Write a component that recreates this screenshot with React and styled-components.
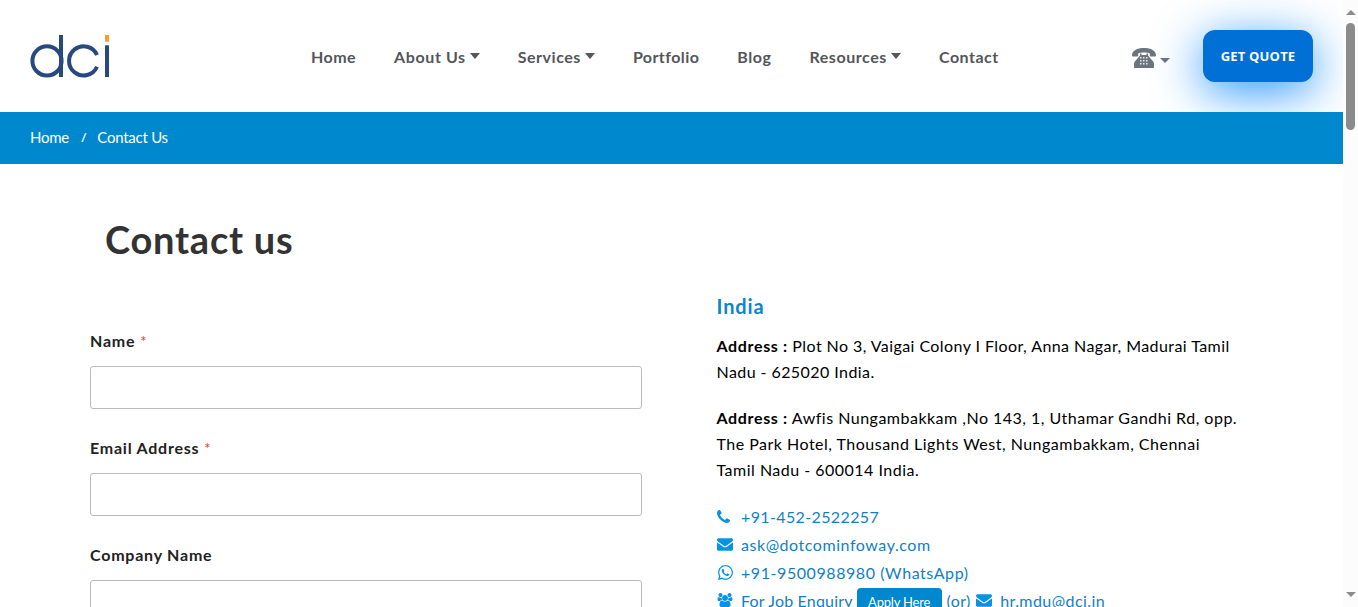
import React from "react";
import styled, { createGlobalStyle } from "styled-components";
import { FaWhatsapp } from "react-icons/fa";

const Global = createGlobalStyle`
  *, *::before, *::after { box-sizing: border-box; }
  body { margin: 0; background: #fff; overflow: hidden; font-family: Lato, "Liberation Sans", sans-serif; font-size: 16px; color: #000; }
  a { color: inherit; text-decoration: none; }
`;

const Shell = styled.div`
  display: flex;
  width: 100%;
  height: 100vh;
  overflow: hidden;
`;
const Page = styled.div`
  flex: 1;
  min-width: 0;
  height: 100%;
  overflow: hidden;
`;

const Header = styled.header`
  display: flex;
  align-items: center;
  height: 112px;
  padding: 0 30px;
`;
const Logo = styled.svg`
  display: block;
  width: 80px;
  height: 44px;
  margin-top: 2px;
  flex: none;
`;
const Nav = styled.nav`
  display: flex;
  gap: 38px;
  margin-left: 201px;
  padding-top: 1px;
`;
const NavLink = styled.a`
  display: flex;
  align-items: center;
  font-weight: 700;
  line-height: 24px;
  letter-spacing: ${(p) => p.$track}px;
  color: #54565a;
  white-space: nowrap;
`;
const Caret = styled.span`
  width: 0;
  height: 0;
  margin-left: 4px;
  margin-top: -1px;
  border: 5px solid transparent;
  border-top: 6px solid currentColor;
  border-bottom: 0;
`;
const HeaderActions = styled.div`
  display: flex;
  align-items: center;
  margin-left: auto;
`;
const PhoneToggle = styled.div`
  display: flex;
  align-items: center;
  margin-right: 33px;
  padding-top: 4px;
  color: #6c757d;
  svg { display: block; }
  ${Caret} { margin-top: 4px; border-top-width: 5px; }
`;
const QuoteButton = styled.a`
  display: flex;
  align-items: center;
  justify-content: center;
  width: 110px;
  height: 52px;
  border-radius: 12px;
  background: #006fd6;
  box-shadow: 0 10px 48px rgba(0, 132, 255, 0.85);
  color: #fff;
  font: 700 13px "Open Sans", sans-serif;
  letter-spacing: 0.2px;
`;

const Breadcrumb = styled.div`
  position: relative;
  display: flex;
  align-items: center;
  gap: 12px;
  height: 52px;
  padding: 0 30px 2px;
  background: #0088ce;
  color: #fff;
  font-size: 15px;
  letter-spacing: -0.25px;
`;
const Slash = styled.span`
  margin-right: -1px;
  font-size: 12px;
  font-weight: 700;
`;

const Content = styled.main`
  padding: 47px 90px 0;
`;
const Title = styled.h1`
  margin: 0 0 0 15px;
  font-size: 38px;
  line-height: 56px;
  font-weight: 700;
  letter-spacing: 0.75px;
  color: #333;
`;
const Columns = styled.div`
  display: grid;
  grid-template-columns: 552px 530px;
  column-gap: 74.5px;
`;
const Form = styled.form`
  padding-top: 62px;
`;
const Field = styled.div`
  margin-bottom: 27px;
`;
const Label = styled.label`
  display: block;
  height: 24px;
  margin-bottom: 13px;
  line-height: 24px;
  font-weight: 700;
  letter-spacing: 0.77px;
  color: #222;
`;
const Required = styled.span`
  font-weight: 400;
  color: #d9463e;
`;
const Input = styled.input`
  display: block;
  width: 100%;
  height: 43px;
  border: 1px solid #bbb;
  border-radius: 3px;
  background: #fff;
`;

const Office = styled.section`
  padding-top: 24px;
`;
const Country = styled.h2`
  margin: 0 0 12px;
  font-size: 20px;
  line-height: 30px;
  font-weight: 700;
  letter-spacing: 0.85px;
  color: #0d85ca;
`;
const Address = styled.p`
  margin: 0 0 20px;
  line-height: 26px;
  letter-spacing: ${(p) => p.$track}px;
  strong { letter-spacing: 0.65px; }
`;
const Contacts = styled.div`
  margin-top: -1px;
  color: #107fc6;
`;
const ContactLine = styled.div`
  display: flex;
  align-items: center;
  height: 28px;
  white-space: nowrap;
`;
const ContactText = styled.a`
  letter-spacing: ${(p) => p.$track}px;
`;
const IconSlot = styled.span`
  display: flex;
  width: 17px;
  margin-right: 7.5px;
  margin-left: ${(p) => p.$before || 0}px;
  color: #0693e6;
  svg { display: block; }
`;
const ApplyButton = styled.a`
  height: 28px;
  margin: 4px 5px 0 4px;
  width: 85px;
  border-radius: 4px;
  background: #0088ce;
  color: #fff;
  font-size: 13px;
  line-height: 28px;
  letter-spacing: -0.2px;
  text-align: center;
`;

const Scrollbar = styled.div`
  display: flex;
  flex-direction: column;
  align-items: center;
  justify-content: space-between;
  width: 15px;
  height: 100%;
  padding: 10px 0 10px;
  background: #fcfcfc;
`;
const ScrollTop = styled.div`
  display: flex;
  flex-direction: column;
  align-items: center;
  gap: 8px;
`;
const Arrow = styled.span`
  width: 0;
  height: 0;
  border: 5px solid transparent;
  ${(p) => (p.$up ? "border-bottom-color: #8b8b8b; border-top: 0;" : "border-top-color: #8b8b8b; border-bottom: 0;")}
`;
const Thumb = styled.div`
  width: 9px;
  height: 107px;
  border-radius: 5px;
  background: #8b8b8b;
`;

const DciLogo = () => (
  <Logo viewBox="30 35 80 44" role="img" aria-label="dci">
    <g fill="none" stroke="#28497f" strokeWidth="4">
      <circle cx="47" cy="60.9" r="14.6" />
      <path d="M61 35V77" />
      <path d="M97 55A14.6 14.6 0 1 0 97 66.8" />
      <path d="M107 45.3V77" />
    </g>
    <rect x="105" y="35" width="4" height="6.7" fill="#fa9c2b" />
  </Logo>
);

const Telephone = () => (
  <svg width="24" height="20" viewBox="0 0 24 20" fill="currentColor">
    <path d="M0 7.5C0 2.5 5 0 12 0s12 2.5 12 7.5c0 .6-.3.9-.9.9h-4.4c-.6 0-.9-.3-.9-.9V5.5C16 4.300 8 4.300 6.200 5.500v2c0 .6-.3.9-.9.900H.9C.3 8.400 0 8.100 0 7.500z" />
    <path d="M8 5.600h1.500v1.400h5V5.600H16v1.900l5.300 6.300c.5.700.7 1.400.7 2.200v3c0 .6-.4 1-1 1H3c-.6 0-1-.4-1-1v-3c0-.8.200-1.500.7-2.200L8 7.500z" />
    <g fill="#fff" fillOpacity="0.85">
      {[9, 12, 15].map((y) =>
        [8, 11, 14].map((x) => <rect key={`${x}-${y}`} x={x} y={y} width="1.500" height="1.500" />)
      )}
    </g>
  </svg>
);

const Phone = () => (
  <svg width="13" height="13" viewBox="0 128 1408 1408" fill="currentColor">
    <path d="M1408 1240q0 27-10 70.5t-21 68.5q-21 50-122 106-94 51-186 51-27 0-52.5-3.5t-57.5-12.5-47.5-14.5-55.5-20.5-49-18q-98-35-175-83-128-79-264.5-215.5t-215.5-264.5q-48-77-83-175-3-9-18-49t-20.5-55.5-14.5-47.5-12.5-57.5-3.5-52.5q0-92 51-186 56-101 106-122 25-11 68.5-21t70.5-10q14 0 21 3 18 6 53 76 11 19 30 54t35 63.5 31 53.5q3 4 17.5 25t21.5 35.5 7 28.5q0 20-28.5 50t-62 55-62 53-28.500 46q0 9 5 22.500t8.500 20.500 14 24 11.500 19q76 137 174 235t235 174q2 1 19 11.500t24 14 20.500 8.500 22.500 5q18 0 46-28.500t53-62 55-62 50-28.500q14 0 28.500 7t35.500 21.500 25 17.500q25 15 53.500 31t63.500 35 54 30q70 35 76 53 3 7 3 21z" />
  </svg>
);

const Envelope = () => (
  <svg width="16" height="13" viewBox="0 256 1792 1408" fill="currentColor">
    <path d="M1792 710v794q0 66-47 113t-113 47h-1472q-66 0-113-47t-47-113v-794q44 49 101 87 362 246 497 345 57 42 92.500 65.500t94.500 48 110 24.500h2q51 0 110-24.500t94.500-48 92.500-65.500q170-123 498-345 57-39 100-87zm0-294q0 79-49 151t-122 123q-376 261-468 325-10 7-42.500 31t-54 38.500-52 32.500-57.500 27-50 9h-2q-23 0-50-9t-57.500-27-52-32.500-54-38.500-42.500-31q-91-64-262-182.500t-205-142.500q-62-42-117-115.500t-55-136.500q0-78 41.500-130t118.500-52h1472q65 0 112.500 47t47.500 113z" />
  </svg>
);

const Users = () => (
  <svg width="16" height="14" viewBox="0 0 1920 1792" fill="currentColor">
    <path d="M593 896q-162 5-265 128h-134q-82 0-138-40.500t-56-118.500q0-353 124-353 6 0 43.500 21t97.500 42.500 119 21.500q67 0 133-23-5 37-5 66 0 139 81 256zm1071 637q0 120-73 189.500t-194 69.500h-874q-121 0-194-69.500t-73-189.500q0-53 3.500-103.500t14-109 26.500-108.500 43-97.500 62-81 85.500-53.500 111.500-20q10 0 43 21.500t73 48 107 48 135 21.500 135-21.500 107-48 73-48 43-21.500q61 0 111.500 20t85.500 53.500 62 81 43 97.500 26.500 108.500 14 109 3.500 103.500zm-1024-1277q0 106-75 181t-181 75-181-75-75-181 75-181 181-75 181 75 75 181zm704 384q0 159-112.500 271.500t-271.500 112.500-271.500-112.500-112.500-271.500 112.500-271.500 271.500-112.500 271.500 112.500 112.500 271.500zm576 225q0 78-56 118.500t-138 40.500h-134q-103-123-265-128 81-117 81-256 0-29-5-66 66 23 133 23 59 0 119-21.500t97.500-42.500 43.500-21q124 0 124 353zm-128-609q0 106-75 181t-181 75-181-75-75-181 75-181 181-75 181 75 75 181z" />
  </svg>
);

const links = [
  { label: "Home", track: 0.45 },
  { label: "About Us", track: 0.62, menu: true },
  { label: "Services", track: 0.52, menu: true },
  { label: "Portfolio", track: 0.42 },
  { label: "Blog", track: 0.55 },
  { label: "Resources", track: 0.57, menu: true },
  { label: "Contact", track: 0.5 },
];

const fields = [
  { label: "Name", required: true },
  { label: "Email Address", required: true },
  { label: "Company Name" },
];

export default function App() {
  return (
    <Shell>
      <Global />
      <Page>
        <Header>
          <DciLogo />
          <Nav>
            {links.map((l) => (
              <NavLink key={l.label} $track={l.track} href="#">
                {l.label}
                {l.menu && <Caret />}
              </NavLink>
            ))}
          </Nav>
          <HeaderActions>
            <PhoneToggle>
              <Telephone />
              <Caret />
            </PhoneToggle>
            <QuoteButton href="#">GET QUOTE</QuoteButton>
          </HeaderActions>
        </Header>
        <Breadcrumb>
          <a href="#">Home</a>
          <Slash>/</Slash>
          <span>Contact Us</span>
        </Breadcrumb>
        <Content>
          <Title>Contact us</Title>
          <Columns>
            <Form>
              {fields.map((f) => (
                <Field key={f.label}>
                  <Label>
                    {f.label} {f.required && <Required>*</Required>}
                  </Label>
                  <Input aria-label={f.label} />
                </Field>
              ))}
            </Form>
            <Office>
              <Country>India</Country>
              <Address $track={0.43}>
                <strong>Address :</strong> Plot No 3, Vaigai Colony I Floor, Anna Nagar, Madurai Tamil
                <br />
                Nadu - 625020 India.
              </Address>
              <Address $track={0.49}>
                <strong>Address :</strong> Awfis Nungambakkam ,No 143, 1, Uthamar Gandhi Rd, opp.
                <br />
                The Park Hotel, Thousand Lights West, Nungambakkam, Chennai
                <br />
                Tamil Nadu - 600014 India.
              </Address>
              <Contacts>
                <ContactLine>
                  <IconSlot><Phone /></IconSlot>
                  <ContactText $track={0.37}>+91-452-2522257</ContactText>
                </ContactLine>
                <ContactLine>
                  <IconSlot><Envelope /></IconSlot>
                  <ContactText $track={0.55}>ask@dotcominfoway.com</ContactText>
                </ContactLine>
                <ContactLine>
                  <IconSlot><FaWhatsapp size={17} /></IconSlot>
                  <ContactText $track={0.57}>+91-9500988980 (WhatsApp)</ContactText>
                </ContactLine>
                <ContactLine>
                  <IconSlot><Users /></IconSlot>
                  <ContactText $track={0.18}>For Job Enquiry</ContactText>
                  <ApplyButton href="#">Apply Here</ApplyButton>
                  <ContactText $track={0.35}>(or)</ContactText>
                  <IconSlot $before={5}><Envelope /></IconSlot>
                  <ContactText $track={0.44}>hr.mdu@dci.in</ContactText>
                </ContactLine>
              </Contacts>
            </Office>
          </Columns>
        </Content>
      </Page>
      <Scrollbar>
        <ScrollTop>
          <Arrow $up />
          <Thumb />
        </ScrollTop>
        <Arrow />
      </Scrollbar>
    </Shell>
  );
}
